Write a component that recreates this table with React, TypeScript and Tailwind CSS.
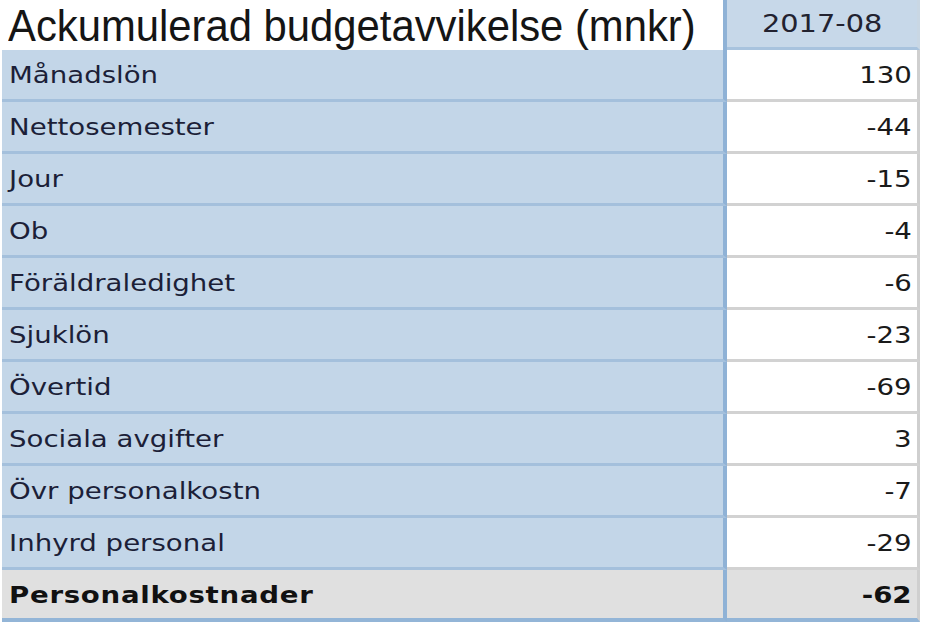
import React from "react";

const rows: [string, string][] = [
  ["Månadslön", "130"],
  ["Nettosemester", "-44"],
  ["Jour", "-15"],
  ["Ob", "-4"],
  ["Föräldraledighet", "-6"],
  ["Sjuklön", "-23"],
  ["Övertid", "-69"],
  ["Sociala avgifter", "3"],
  ["Övr personalkostn", "-7"],
  ["Inhyrd personal", "-29"],
];

const cellFont = { fontFamily: '"DejaVu Sans", Verdana, sans-serif' };

export default function App() {
  return (
    <div className="w-[927px] h-[633px] bg-white overflow-hidden">
      <div className="ml-[2px] w-[918px] flex flex-col">
        {/* header */}
        <div className="flex h-[50px] relative z-10">
          <div className="w-[725px] border-r-[4px] border-[#8fb2d6] bg-white flex items-center pl-[6px]">
            <span
              className="inline-block whitespace-nowrap origin-left scale-x-[0.95] text-[44px] leading-none text-[#151515] mt-[2px]"
              style={{ fontFamily: '"Liberation Sans", Arial, sans-serif' }}
            >
              Ackumulerad budgetavvikelse (mnkr)
            </span>
          </div>
          <div className="flex-1 bg-[#c7d8e9] border-b-[3px] border-[#a8c3de] border-r-[3px] border-r-[#c9d7e4] flex items-center justify-center">
            <span
              className="inline-block whitespace-nowrap scale-x-[1.2] text-[24px] leading-none text-[#222230]"
              style={cellFont}
            >
              2017-08
            </span>
          </div>
        </div>
        {rows.map(([label, val]) => (
          <div key={label} className="flex h-[52px]">
            <div className="w-[725px] bg-[#c3d6e8] border-r-[4px] border-[#8fb2d6] border-b-[3px] border-b-[#a4c0dc] flex items-center pl-[7px] pt-[2px]">
              <span
                className="inline-block whitespace-nowrap origin-left scale-x-[1.2] text-[23px] leading-none text-[#1c1f38]"
                style={cellFont}
              >
                {label}
              </span>
            </div>
            <div className="flex-1 bg-white border-b-[3px] border-[#d2d2d2] border-r-[3px] border-r-[#cfcfcf] flex items-center justify-end pr-[5px] pt-[2px]">
              <span
                className="inline-block whitespace-nowrap origin-right scale-x-[1.2] text-[23px] leading-none text-[#1a1a1a]"
                style={cellFont}
              >
                {val}
              </span>
            </div>
          </div>
        ))}
        <div className="flex h-[52px]">
          <div className="w-[725px] bg-[#e0e0e0] border-r-[4px] border-[#8fb2d6] border-b-[4px] border-b-[#93b5d7] flex items-center pl-[7px] pt-[2px]">
            <span
              className="inline-block whitespace-nowrap origin-left scale-x-[1.2] tracking-[0.6px] text-[23px] leading-none font-bold text-[#111]"
              style={cellFont}
            >
              Personalkostnader
            </span>
          </div>
          <div className="flex-1 bg-[#e0e0e0] border-b-[4px] border-[#93b5d7] border-r-[3px] border-r-[#cfcfcf] flex items-center justify-end pr-[5px] pt-[2px]">
            <span
              className="inline-block whitespace-nowrap origin-right scale-x-[1.2] text-[23px] leading-none font-bold text-[#111]"
              style={cellFont}
            >
              -62
            </span>
          </div>
        </div>
      </div>
    </div>
  );
}
